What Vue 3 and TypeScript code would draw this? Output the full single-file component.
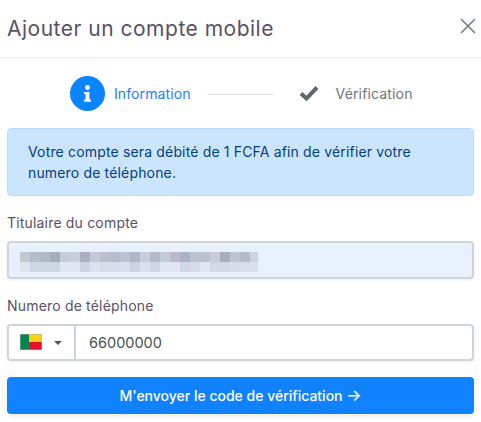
<script setup lang="ts">
const top = ['#c3c9d0','#b3bcc9','#b0b9c5','#a6adbb','#c5cdd8','#c8cfdc','#aab0bf','#c3c9d8','#b9bfcd','#b6bdce','#bcc3d0','#b0b6c6','#c6cddb','#b5b9c8','#c3cada','#bcb9c6','#a9b2c6','#bac1cf','#bac1cf','#c7ced9','#a9adb8','#bcc4d4','#b5bcc8','#ccd3e0']
const bottom = ['#dfe5f0','#ced5e3','#ced5e3','#ced5e3','#dfe6f2','#dfe6f2','#cdd3e1','#dbe2ef','#d6dcea','#d6dcea','#d9e0ed','#ccd2e3','#d9e0ed','#d0d6e5','#dfe6f2','#dfe6f2','#d0d7e6','#d4dae8','#e0e6f2','#d2d9e6','#d2d9e6','#d5dbe9','#d8dfec','#d8dfec']
</script>

<template>
  <div class="modal">
    <header class="head">
      <h1>Ajouter un compte mobile</h1>
      <svg class="close" viewBox="0 0 16 16" width="16" height="16" aria-label="Fermer">
        <path d="M1 1 15 15M15 1 1 15" stroke="#7b7f85" stroke-width="1.7" fill="none" />
      </svg>
    </header>

    <div class="steps">
      <span class="badge">
        <svg viewBox="0 0 12 24" width="9" height="21">
          <circle cx="6" cy="4" r="3.2" fill="#fff" />
          <path d="M1.5 10H8.5V20H10.5V23H1.5V20H3.5V13H1.5Z" fill="#fff" />
        </svg>
      </span>
      <span class="step active">Information</span>
      <span class="rule"></span>
      <svg class="check" viewBox="0 0 20 16" width="20" height="16">
        <path d="M2 8.5 7.5 13.5 18 2.5" stroke="#5f6670" stroke-width="4" fill="none" />
      </svg>
      <span class="step">Vérification</span>
    </div>

    <div class="notice">Votre compte sera débité de 1 FCFA afin de vérifier votre numero de téléphone.</div>

    <label class="label">Titulaire du compte</label>
    <div class="field filled">
      <div class="blur">
        <i v-for="(c, n) in top" :key="'t' + n" :style="{ background: c }"></i>
        <i v-for="(c, n) in bottom" :key="'b' + n" :style="{ background: c }"></i>
      </div>
    </div>

    <label class="label second">Numero de téléphone</label>
    <div class="field phone">
      <div class="country">
        <svg class="flag" viewBox="0 0 22 16" width="22" height="16">
          <rect width="22" height="16" fill="#aaa" />
          <rect x=".5" y=".5" width="8.5" height="15" fill="#008751" />
          <rect x="9" y=".5" width="12.5" height="7.5" fill="#fcd116" />
          <rect x="9" y="8" width="12.5" height="7.5" fill="#e8112d" />
        </svg>
        <span class="caret"></span>
      </div>
      <span class="number">66000000</span>
    </div>

    <button class="send" type="button">M'envoyer le code de vérification <span class="arrow">→</span></button>
  </div>
</template>

<style>
body { background: #fff; }
</style>

<style scoped>
.modal {
  width: 481px;
  height: 422px;
  box-sizing: border-box;
  padding: 0 7px;
  font-family: Inter, "Noto Sans", sans-serif;
  overflow: hidden;
  background: #fff;
}
.head {
  height: 58px;
  margin: 0 -7px;
  padding: 0 5px 0 7px;
  box-sizing: border-box;
  border-bottom: 1px solid #e9ecef;
  display: flex;
  align-items: center;
  justify-content: space-between;
}
h1 {
  margin: 0;
  font-size: 21px;
  line-height: 52px;
  font-weight: 400;
  letter-spacing: .5px;
  color: #5a5068;
}
.close { margin-bottom: 6px; }
.steps {
  height: 70px;
  display: flex;
  align-items: center;
  padding-left: 63px;
}
.badge {
  width: 35px;
  height: 35px;
  border-radius: 50%;
  background: #0a84ff;
  display: flex;
  align-items: center;
  justify-content: center;
}
.step { font-size: 14px; letter-spacing: .15px; color: #6c757d; }
.step.active { color: #1a80ff; margin-left: 9px; letter-spacing: .1px; }
.rule {
  width: 67px;
  height: 1px;
  margin: 2px 25px 0 16px;
  background: #dee2e6;
}
.check { margin-right: 17px; }
.notice {
  box-sizing: border-box;
  height: 68px;
  padding: 12px 20px;
  background: #cce5ff;
  border: 1px solid #b8daff;
  border-radius: 4px;
  font-size: 14px;
  letter-spacing: .16px;
  line-height: 21px;
  color: #004085;
}
.label {
  display: block;
  margin-top: 16px;
  font-size: 14px;
  letter-spacing: .18px;
  line-height: 21px;
  color: #5a5068;
}
.field {
  box-sizing: border-box;
  height: 38px;
  margin-top: 8px;
  border: 2px solid #ced4da;
  border-radius: 4px;
  box-shadow: 0 1px 3px rgba(0, 0, 0, .08);
}
.filled {
  background: #e8f0fe;
  padding: 9px 11px;
}
.blur {
  width: 238px;
  display: grid;
  grid-template-columns: repeat(23, 10px) 8px;
  grid-auto-rows: 10px;
}
.phone {
  height: 37px;
  display: flex;
  align-items: stretch;
  background: #fff;
}
.country {
  width: 67px;
  box-sizing: border-box;
  border-right: 2px solid #ced4da;
  padding: 0 11px;
  display: flex;
  align-items: center;
}
.flag { margin-top: -2px; }
.caret {
  margin-left: 12px;
  border: 4px solid transparent;
  border-top-color: #555;
  border-bottom: 0;
}
.number {
  padding-left: 13px;
  font-size: 14.5px;
  line-height: 33px;
  color: #495057;
}
.send {
  display: block;
  width: 100%;
  height: 37px;
  margin-top: 16px;
  padding: 0;
  border: 0;
  border-radius: 4px;
  background: #1082ff;
  color: #fff;
  font: 500 14px Inter, "Noto Sans", sans-serif;
  box-shadow: 0 2px 6px rgba(0, 0, 0, .08);
}
.arrow { font-size: 16px; line-height: 1; }
</style>
